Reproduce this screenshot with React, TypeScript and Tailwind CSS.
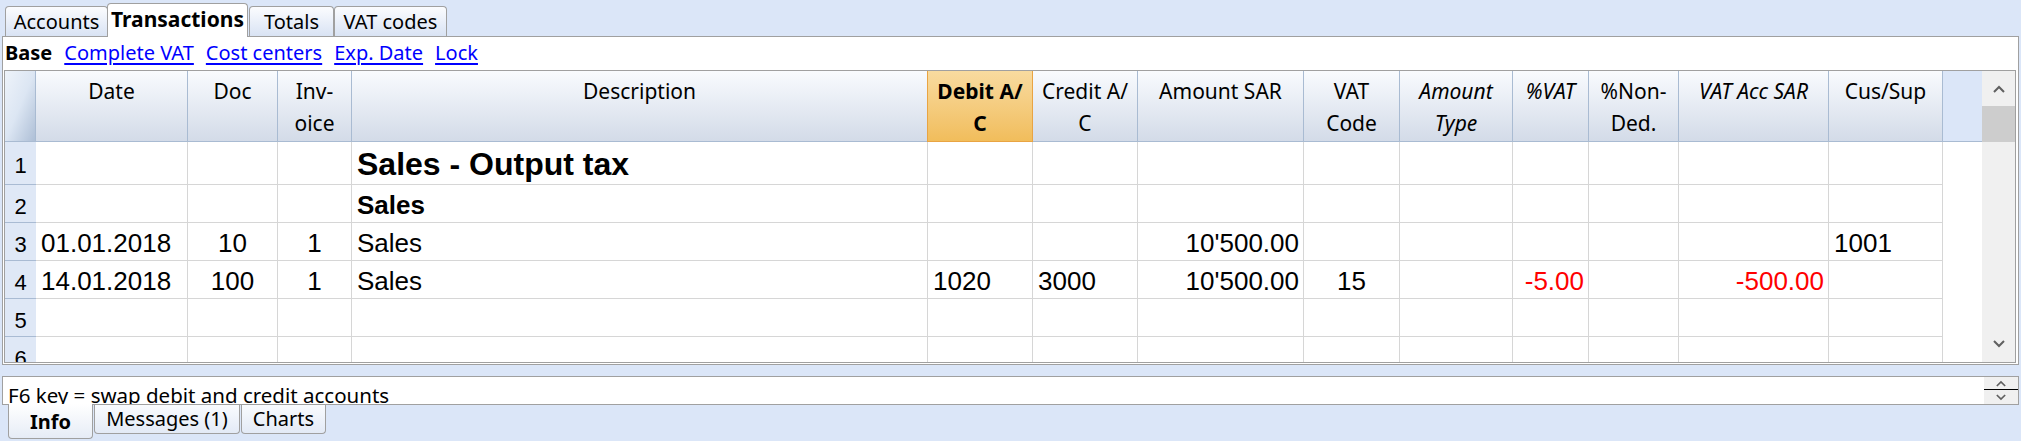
import React from "react";

const GRID =
  "grid grid-cols-[31px_152px_90px_74px_576px_105px_105px_166px_96px_113px_76px_90px_150px_114px_39px]";

type Align = "l" | "c" | "r";
type Cell = { t?: string; a?: Align; red?: boolean; cls?: string };

const alignCls = (a: Align = "l") =>
  a === "l" ? "justify-start pl-[5px]" : a === "c" ? "justify-center" : "justify-end pr-[4px]";

const colAlign: Align[] = ["l", "c", "c", "l", "l", "l", "r", "c", "l", "r", "r", "r", "l"];

const rows: { h: string; num: string; cells: Record<number, Cell> }[] = [
  { h: "h-[43px]", num: "1", cells: { 3: { t: "Sales - Output tax", cls: "font-bold text-[32px]" } } },
  { h: "h-[38px]", num: "2", cells: { 3: { t: "Sales", cls: "font-bold text-[26px]" } } },
  {
    h: "h-[38px]",
    num: "3",
    cells: {
      0: { t: "01.01.2018" },
      1: { t: "10" },
      2: { t: "1" },
      3: { t: "Sales" },
      6: { t: "10'500.00" },
      12: { t: "1001" },
    },
  },
  {
    h: "h-[38px]",
    num: "4",
    cells: {
      0: { t: "14.01.2018" },
      1: { t: "100" },
      2: { t: "1" },
      3: { t: "Sales" },
      4: { t: "1020" },
      5: { t: "3000" },
      6: { t: "10'500.00" },
      7: { t: "15" },
      9: { t: "-5.00", red: true },
      11: { t: "-500.00", red: true },
    },
  },
  { h: "h-[38px]", num: "5", cells: {} },
  { h: "h-[38px]", num: "6", cells: {} },
];

function TopTab({ label, active, w, ml }: { label: string; active?: boolean; w: string; ml: string }) {
  return active ? (
    <div
      className={`${w} ${ml} relative z-10 -mb-px h-[34px] bg-white border border-b-0 border-[#a0a0a0] rounded-t-[4px] flex items-center justify-center font-bold text-[21px] leading-none pb-[2px]`}
    >
      {label}
    </div>
  ) : (
    <div
      className={`${w} ${ml} h-[30px] bg-gradient-to-b from-[#fbfcfe] to-[#d9e3f4] border border-b-0 border-[#a0a0a0] rounded-t-[4px] flex items-center justify-center text-[20px] leading-none`}
    >
      {label}
    </div>
  );
}

function BottomTab({ label, active, w, ml }: { label: string; active?: boolean; w: string; ml: string }) {
  return active ? (
    <div
      className={`${w} ${ml} relative z-10 -mt-px h-[35px] bg-gradient-to-b from-white to-[#e6ecf6] border border-t-0 border-[#a0a0a0] rounded-b-[4px] flex items-center justify-center font-bold text-[20px] leading-none pt-[2px]`}
    >
      {label}
    </div>
  ) : (
    <div
      className={`${w} ${ml} h-[29px] bg-gradient-to-b from-[#f9fbfe] to-[#e3eaf6] border border-t-0 border-[#a0a0a0] rounded-b-[4px] flex items-center justify-center text-[20px] leading-none`}
    >
      {label}
    </div>
  );
}

function HeadCell({
  lines,
  italic,
  last,
}: {
  lines: string[];
  italic?: boolean;
  last?: boolean;
}) {
  return (
    <div
      className={`h-[70px] bg-gradient-to-b from-[#f9fbfe] to-[#d3dbe8] ${
        last ? "" : "border-r border-[#a9bbd2]"
      } flex flex-col items-center pt-[4px] text-[21px] leading-[32px] whitespace-nowrap ${italic ? "italic" : ""}`}
    >
      {lines.map((l, i) => (
        <span key={i}>{l}</span>
      ))}
    </div>
  );
}

function Chevron({ up, cls }: { up?: boolean; cls?: string }) {
  return (
    <svg width="12" height="8" viewBox="0 0 12 8" className={cls}>
      <path
        d={up ? "M1 7 L6 2 L11 7" : "M1 1 L6 6 L11 1"}
        fill="none"
        stroke="#606060"
        strokeWidth="2"
      />
    </svg>
  );
}

export default function App() {
  return (
    <div className="w-[2021px] h-[441px] bg-[#dbe6f8] overflow-hidden font-['Noto_Sans',sans-serif] text-black">
      {/* top tabs */}
      <div className="h-[36px] flex items-end pl-[5px]">
        <TopTab label="Accounts" w="w-[103px]" ml="ml-0" />
        <TopTab label="Transactions" active w="w-[141px]" ml="-ml-px" />
        <TopTab label="Totals" w="w-[85px]" ml="ml-[1px]" />
        <TopTab label="VAT codes" w="w-[113px]" ml="ml-0" />
      </div>

      {/* main panel */}
      <div className="ml-[2px] w-[2017px] h-[329px] bg-white border border-[#a0a0a0] flex flex-col">
        <div className="h-[33px] flex items-center pl-[2px] text-[20px] leading-none gap-[12px] pb-[2px]">
          <span className="font-bold">Base</span>
          <span className="text-[#0000ff] underline underline-offset-[3px]">Complete VAT</span>
          <span className="text-[#0000ff] underline underline-offset-[3px]">Cost centers</span>
          <span className="text-[#0000ff] underline underline-offset-[3px]">Exp. Date</span>
          <span className="text-[#0000ff] underline underline-offset-[3px]">Lock</span>
        </div>

        <div className="ml-[1px] w-[2012px] h-[293px] border border-[#a0a0a0] flex">
          <div className="w-[1977px] flex flex-col">
            {/* header */}
            <div className={`${GRID} h-[71px] border-b border-[#a9bbd2]`}>
              <div className="h-[70px] bg-gradient-to-br from-[#eef3fa] via-[#dce6f3] to-[#aebfd6] border-r border-[#a9bbd2]" />
              <HeadCell lines={["Date"]} />
              <HeadCell lines={["Doc"]} />
              <HeadCell lines={["Inv-", "oice"]} />
              <HeadCell lines={["Description"]} />
              <div className="h-[71px] -mb-px bg-gradient-to-b from-[#f8db9f] to-[#f1bd5b] border-x border-b border-[#e9a443] -ml-px flex flex-col items-center pt-[4px] text-[21px] leading-[32px] font-bold whitespace-nowrap">
                <span>Debit A/</span>
                <span>C</span>
              </div>
              <HeadCell lines={["Credit A/", "C"]} />
              <HeadCell lines={["Amount SAR"]} />
              <HeadCell lines={["VAT", "Code"]} />
              <HeadCell lines={["Amount", "Type"]} italic />
              <HeadCell lines={["%VAT"]} italic />
              <HeadCell lines={["%Non-", "Ded."]} />
              <HeadCell lines={["VAT Acc SAR"]} italic />
              <HeadCell lines={["Cus/Sup"]} />
              <div className="h-[70px] bg-[#dbe6f8]" />
            </div>
            {/* body */}
            <div className="h-[220px] overflow-hidden font-['Liberation_Sans',Arial,sans-serif]">
              {rows.map((r) => (
                <div key={r.num} className={`${GRID} ${r.h}`}>
                  <div className="bg-[#dfe8f6] border-b border-[#a9bbd3] flex items-center justify-center pt-[6px] text-[22px] leading-none">
                    {r.num}
                  </div>
                  {colAlign.map((a, i) => {
                    const c = r.cells[i];
                    return (
                      <div
                        key={i}
                        className={`border-r border-b border-[#d6d6d6] flex items-center whitespace-nowrap overflow-visible ${alignCls(
                          a
                        )} ${c?.red ? "text-[#ff0000]" : ""} ${c?.cls ?? "text-[26px]"} leading-none pt-[2px]`}
                      >
                        {c?.t ?? ""}
                      </div>
                    );
                  })}
                  <div className="bg-white" />
                </div>
              ))}
            </div>
          </div>
          {/* scrollbar */}
          <div className="w-[33px] bg-[#f0f0f0] flex flex-col">
            <div className="h-[35px] flex items-center justify-center">
              <Chevron up />
            </div>
            <div className="h-[36px] bg-[#cdcdcd]" />
            <div className="flex-1" />
            <div className="h-[32px] flex items-center justify-center pb-[4px]">
              <Chevron />
            </div>
          </div>
        </div>
      </div>

      <div className="h-[11px]" />

      {/* info box */}
      <div className="ml-[2px] w-[2017px] h-[29px] bg-white border border-[#a0a0a0] flex">
        <div className="flex-1 overflow-hidden pl-[5px] pt-[4px] text-[20.5px] leading-[28px] whitespace-nowrap">
          F6 key = swap debit and credit accounts
        </div>
        <div className="w-[34px] bg-[#f0f0f0] flex flex-col">
          <div className="h-[13px] flex items-center justify-center border-b border-black">
            <Chevron up cls="w-[10px] h-[7px]" />
          </div>
          <div className="flex-1 flex items-center justify-center">
            <Chevron cls="w-[10px] h-[7px]" />
          </div>
        </div>
      </div>

      {/* bottom tabs */}
      <div className="flex items-start pl-[8px]">
        <BottomTab label="Info" active w="w-[85px]" ml="ml-0" />
        <BottomTab label="Messages (1)" w="w-[146px]" ml="ml-[1px]" />
        <BottomTab label="Charts" w="w-[85px]" ml="ml-[1px]" />
      </div>
    </div>
  );
}
